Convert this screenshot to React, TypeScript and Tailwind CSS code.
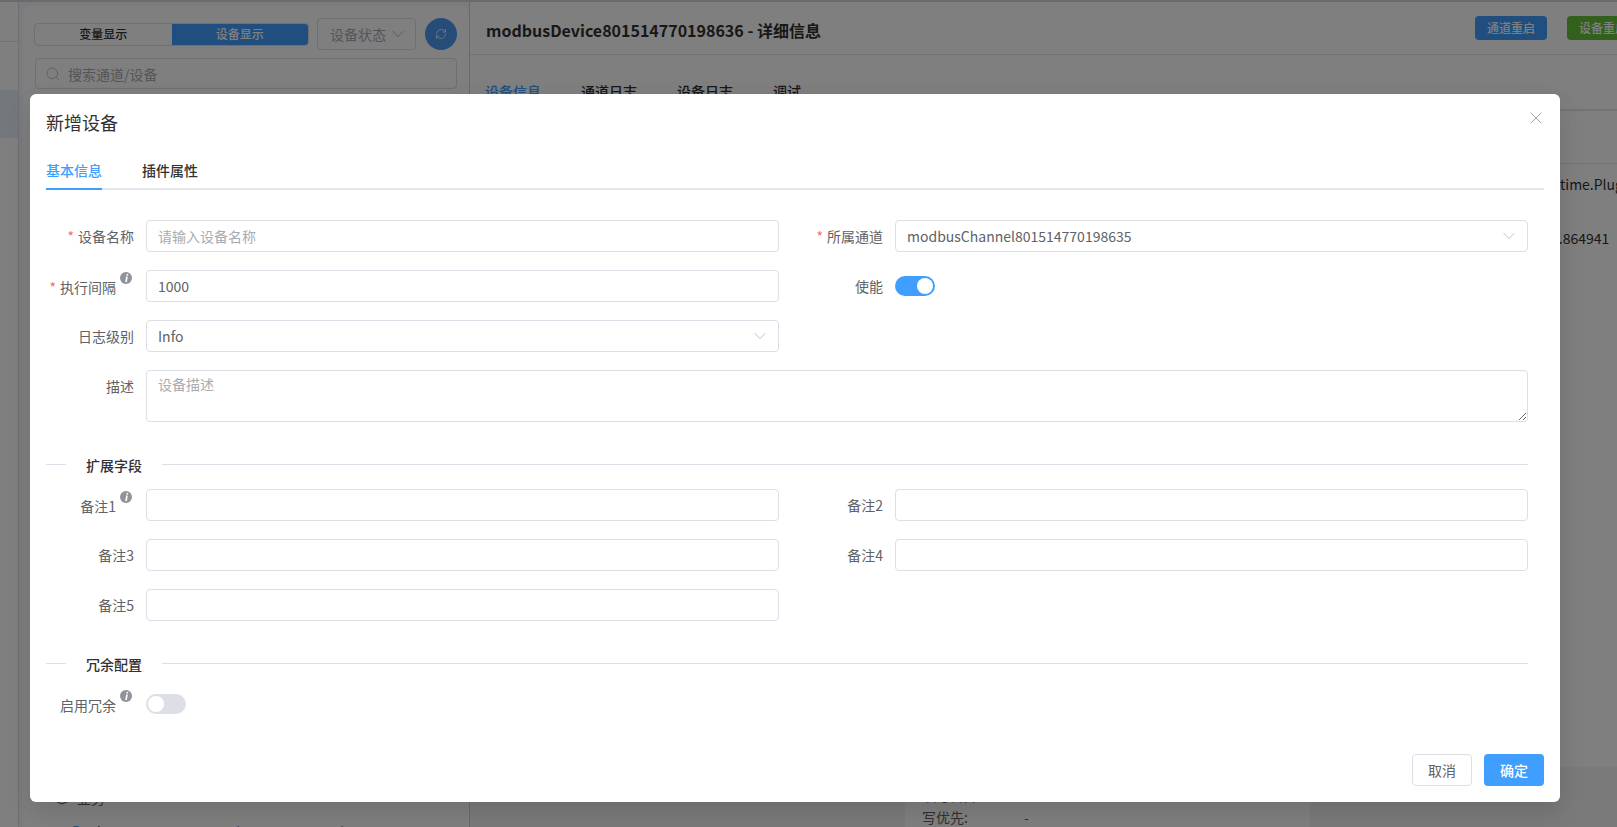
import { RefreshCw, Search, ChevronDown, X, Layers } from "lucide-react";

const inputCls =
  "block h-8 w-full rounded-[4px] border border-[#dcdfe6] bg-white px-[11px] text-sm text-[#606266] outline-none placeholder:text-[#a8abb2]";

function Info() {
  return (
    <svg viewBox="0 0 12 12" className="absolute right-[-16px] top-[-5px] h-3 w-3">
      <circle cx="6" cy="6" r="6" fill="#909399" />
      <path d="M6.6 2h1.7l-.3 1.5H6.3zM6.1 4.4h1.7L6.9 10H5.2z" fill="#fff" />
    </svg>
  );
}

function Field({
  label,
  required,
  info,
  width,
  children,
}: {
  label: string;
  required?: boolean;
  info?: boolean;
  width: string;
  children: React.ReactNode;
}) {
  return (
    <div className="flex items-start">
      <div className={`${width} flex h-8 shrink-0 items-center justify-end pr-3 text-sm text-[#606266]`}>
        <span className={`relative whitespace-nowrap ${info ? "mr-[18px] mt-[2px]" : ""}`}>
          {required && <span className="mr-1 text-[#f56c6c]">*</span>}
          {label}
          {info && <Info />}
        </span>
      </div>
      <div className="min-w-0 flex-1">{children}</div>
    </div>
  );
}

function Select({ value }: { value: string }) {
  return (
    <div className="flex h-8 w-full items-center justify-between rounded-[4px] border border-[#dcdfe6] bg-white pl-[11px] pr-2 text-sm text-[#606266]">
      <span>{value}</span>
      <ChevronDown size={20} strokeWidth={0.9} className="text-[#a8abb2]" />
    </div>
  );
}

function Toggle({ on }: { on?: boolean }) {
  return (
    <div className="flex h-8 items-center">
      <div className={`flex h-5 w-10 items-center rounded-full p-[2px] ${on ? "justify-end bg-[#409eff]" : "justify-start bg-[#dcdfe6]"}`}>
        <div className="h-4 w-4 rounded-full bg-white" />
      </div>
    </div>
  );
}

function SectionTitle({ children }: { children: React.ReactNode }) {
  return (
    <div className="flex items-center">
      <div className="h-px w-5 bg-[#dcdfe6]" />
      <span className="mt-[2px] px-5 text-sm font-medium leading-5 text-[#303133]">{children}</span>
      <div className="h-px flex-1 bg-[#dcdfe6]" />
    </div>
  );
}

function Background() {
  return (
    <div className="flex h-full flex-col bg-[#f5f6f8]">
      <div className="h-[2px] shrink-0 bg-[#d4d7dd]" />
      <div className="flex min-h-0 flex-1">
        <aside className="w-[19px] shrink-0 border-r border-[#dcdfe6] bg-white">
          <div className="h-[40px] border-b border-[#e4e7ed]" />
          <div className="mt-12 h-12 bg-[#e8f0fb]" />
        </aside>
        <section className="ml-1 mt-1 w-[446px] shrink-0 rounded-t-lg bg-white px-3 pt-3">
          <div className="flex items-center">
            <div className="-ml-px flex h-[23px] w-[275px] overflow-hidden rounded-[4px] border border-[#dcdfe6] text-xs font-medium">
              <div className="flex flex-1 items-center justify-center text-[#303133]">变量显示</div>
              <div className="flex flex-1 items-center justify-center bg-[#409eff] text-white">设备显示</div>
            </div>
            <div className="ml-2 flex h-8 w-[99px] items-center justify-between rounded-[4px] border border-[#dcdfe6] pl-3 pr-[7px] text-sm text-[#a8abb2]">
              设备状态
              <ChevronDown size={20} strokeWidth={1} />
            </div>
            <div className="ml-[9px] flex h-8 w-8 items-center justify-center rounded-full bg-[#4a9bf0] text-white">
              <RefreshCw size={12} strokeWidth={1.5} />
            </div>
          </div>
          <div className="mt-2 flex h-[31px] items-center rounded-[4px] border border-[#dcdfe6] pl-[9px] text-sm text-[#a8abb2]">
            <Search size={16} strokeWidth={1.1} className="mr-[7px]" />
            搜索通道/设备
          </div>
          <div className="mt-[13px] h-px bg-[#e4e7ed]" />
          <div className="mt-[685px] flex h-5 items-center pl-5 text-sm text-[#606266]">
            <Layers size={14} className="mr-2" />
            业务
          </div>
          <div className="mt-[13px] pl-[37px] text-sm whitespace-nowrap text-[#606266]">
            <span className="text-[#409eff]">D</span>evice801514770198636 (10.10.10.10:502) 8015147701
          </div>
        </section>
        <div className="w-px shrink-0 bg-[#cfd3da]" />
        <main className="flex min-w-0 flex-1 flex-col bg-white">
          <header className="flex h-[53px] shrink-0 items-center justify-between border-b border-[#e4e7ed] pl-4 pt-[4px]">
            <h1 className="whitespace-nowrap text-base font-bold text-[#303133]">modbusDevice801514770198636 - 详细信息</h1>
            <div className="-mr-[22px] flex shrink-0 gap-5 pb-[4px]">
              <div className="flex h-6 w-[72px] items-center justify-center rounded-[4px] bg-[#409eff] text-xs font-medium text-white">通道重启</div>
              <div className="flex h-6 w-[72px] items-center justify-center rounded-[4px] bg-[#67c23a] text-xs font-medium text-white">设备重启</div>
            </div>
          </header>
          <nav className="flex h-[56px] shrink-0 items-end gap-[40px] border-b-2 border-[#e4e7ed] pb-[8px] pl-[15px] text-sm font-medium text-[#303133]">
            <span className="text-[#409eff]">设备信息</span>
            <span>通道日志</span>
            <span>设备日志</span>
            <span>调试</span>
          </nav>
          <div className="h-[53px] shrink-0 border-b border-[#e4e7ed]" />
          <div className="flex h-[56px] shrink-0 items-center justify-end overflow-hidden whitespace-nowrap pb-[16px] text-sm text-[#303133]">
            <span className="w-[57px]">time.Plugin</span>
          </div>
          <div className="flex h-[40px] shrink-0 items-start justify-end whitespace-nowrap pt-[8px] text-sm text-[#303133]">
            <span className="w-[66px]">9.864941</span>
          </div>
          <div className="mt-auto h-[60px] shrink-0 bg-[#f5f5f5] pl-[435px]">
            <div className="h-full w-[405px] bg-white pl-[17px] pt-[18px] text-sm text-[#606266]">
              <div>读写合并:</div>
              <div className="mt-[2px] flex">
                <span className="w-[102px]">写优先:</span>
                <span>-</span>
              </div>
            </div>
          </div>
        </main>
      </div>
    </div>
  );
}

export default function App() {
  return (
    <div className="relative h-[827px] w-[1617px] overflow-hidden font-['Noto_Sans_CJK_SC','Noto_Sans',sans-serif]">
      <Background />
      <div className="absolute inset-0 bg-black/50 pl-[30px] pt-[94px]">
        <div className="relative flex h-[708px] w-[1530px] flex-col rounded-[6px] bg-white px-4 shadow-[0_12px_32px_4px_rgba(0,0,0,0.04),0_8px_20px_rgba(0,0,0,0.08)]">
          <button className="absolute right-[14px] top-[14px] text-[#909399]">
            <X size={20} strokeWidth={1} />
          </button>
          <h2 className="mt-[15px] text-lg leading-[26px] text-[#303133]">新增设备</h2>
          <div className="mt-[19px] flex h-[36px] gap-10 border-b-2 border-[#e4e7ed] text-sm font-medium">
            <div className="-mb-[2px] h-[36px] border-b-2 border-[#409eff] leading-[32px] text-[#409eff]">基本信息</div>
            <div className="leading-[32px] text-[#303133]">插件属性</div>
          </div>

          <div className="mt-[30px] w-[1482px]">
            <div className="grid grid-cols-[733px_749px] gap-y-[18px]">
              <Field label="设备名称" required width="w-[100px]">
                <input className={inputCls} placeholder="请输入设备名称" />
              </Field>
              <Field label="所属通道" required width="w-[116px]">
                <Select value="modbusChannel801514770198635" />
              </Field>
              <Field label="执行间隔" required info width="w-[100px]">
                <input className={inputCls} defaultValue="1000" />
              </Field>
              <Field label="使能" width="w-[116px]">
                <Toggle on />
              </Field>
              <Field label="日志级别" width="w-[100px]">
                <Select value="Info" />
              </Field>
              <div />
            </div>
            <div className="mt-[18px]">
              <Field label="描述" width="w-[100px]">
                <textarea className="block h-[52px] w-full rounded-[4px] border border-[#dcdfe6] bg-white px-[11px] py-[1px] text-sm leading-6 text-[#606266] outline-none placeholder:text-[#a8abb2]" placeholder="设备描述" />
              </Field>
            </div>

            <div className="mt-[31px]">
              <SectionTitle>扩展字段</SectionTitle>
            </div>
            <div className="mt-[14px] grid grid-cols-[733px_749px] gap-y-[18px]">
              <Field label="备注1" info width="w-[100px]">
                <input className={inputCls} />
              </Field>
              <Field label="备注2" width="w-[116px]">
                <input className={inputCls} />
              </Field>
              <Field label="备注3" width="w-[100px]">
                <input className={inputCls} />
              </Field>
              <Field label="备注4" width="w-[116px]">
                <input className={inputCls} />
              </Field>
              <Field label="备注5" width="w-[100px]">
                <input className={inputCls} />
              </Field>
              <div />
            </div>

            <div className="mt-[31px]">
              <SectionTitle>冗余配置</SectionTitle>
            </div>
            <div className="mt-[14px]">
              <Field label="启用冗余" info width="w-[100px]">
                <Toggle />
              </Field>
            </div>
          </div>

          <div className="absolute bottom-4 right-4 flex gap-3">
            <button className="h-8 w-[60px] rounded-[4px] border border-[#dcdfe6] bg-white text-sm text-[#606266]">取消</button>
            <button className="h-8 w-[60px] rounded-[4px] bg-[#409eff] text-sm font-medium text-white">确定</button>
          </div>
        </div>
      </div>
    </div>
  );
}
